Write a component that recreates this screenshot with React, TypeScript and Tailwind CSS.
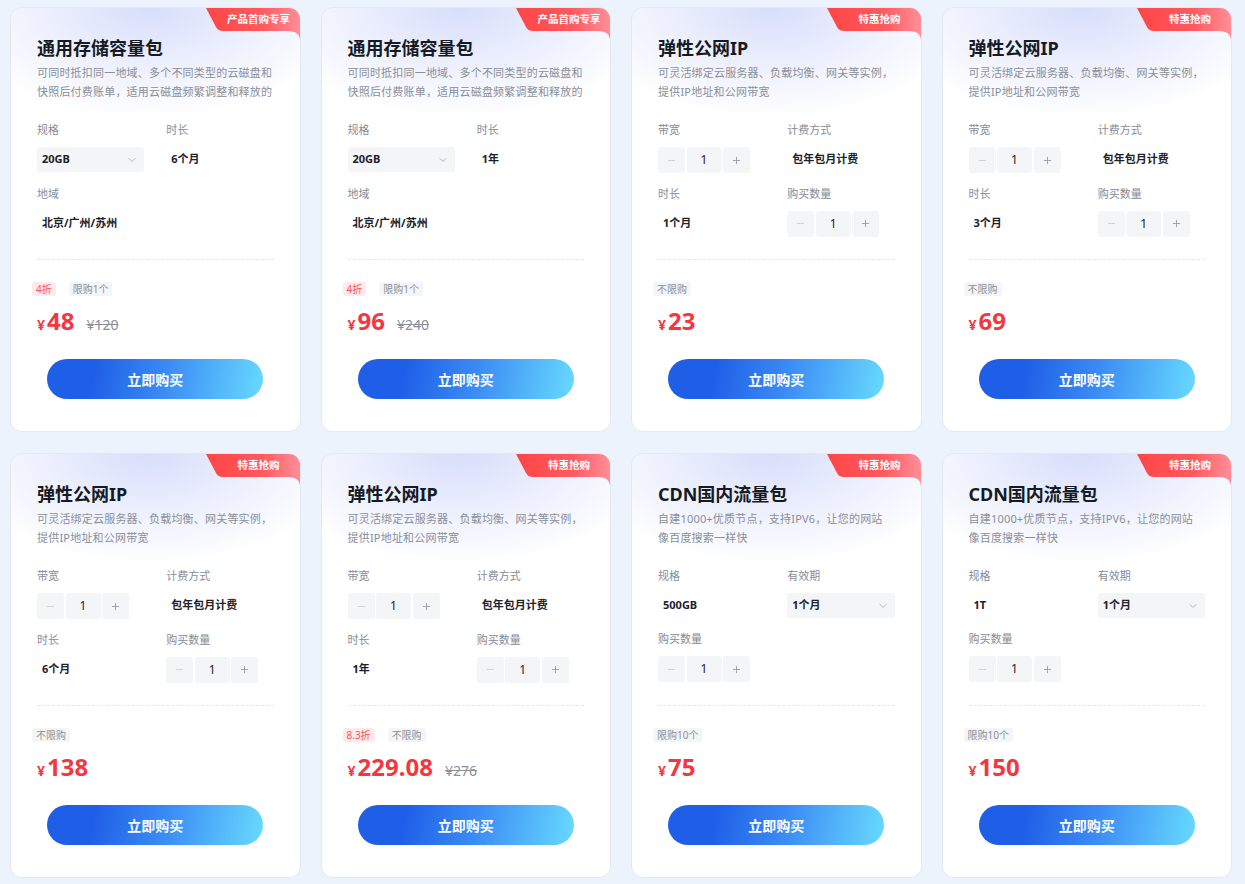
import { ChevronDown, Minus, Plus } from "lucide-react"

type Spec =
  | { label: string; kind: "select"; value: string }
  | { label: string; kind: "text"; value: string }
  | { label: string; kind: "stepper"; value: string }

type Tag = { text: string; red?: boolean }

type Product = {
  badge: string
  title: string
  desc: [string, string]
  specs: Spec[]
  tags: Tag[]
  price: string
  old?: string
}

const storageDesc: [string, string] = [
  "可同时抵扣同一地域、多个不同类型的云磁盘和",
  "快照后付费账单，适用云磁盘频繁调整和释放的",
]
const ipDesc: [string, string] = ["可灵活绑定云服务器、负载均衡、网关等实例，", "提供IP地址和公网带宽"]
const cdnDesc: [string, string] = ["自建1000+优质节点，支持IPV6，让您的网站", "像百度搜索一样快"]

const ipSpecs = (dur: string): Spec[] => [
  { label: "带宽", kind: "stepper", value: "1" },
  { label: "计费方式", kind: "text", value: "包年包月计费" },
  { label: "时长", kind: "text", value: dur },
  { label: "购买数量", kind: "stepper", value: "1" },
]

const cdnSpecs = (size: string): Spec[] => [
  { label: "规格", kind: "text", value: size },
  { label: "有效期", kind: "select", value: "1个月" },
  { label: "购买数量", kind: "stepper", value: "1" },
]

const products: Product[] = [
  {
    badge: "产品首购专享",
    title: "通用存储容量包",
    desc: storageDesc,
    specs: [
      { label: "规格", kind: "select", value: "20GB" },
      { label: "时长", kind: "text", value: "6个月" },
      { label: "地域", kind: "text", value: "北京/广州/苏州" },
    ],
    tags: [{ text: "4折", red: true }, { text: "限购1个" }],
    price: "48",
    old: "120",
  },
  {
    badge: "产品首购专享",
    title: "通用存储容量包",
    desc: storageDesc,
    specs: [
      { label: "规格", kind: "select", value: "20GB" },
      { label: "时长", kind: "text", value: "1年" },
      { label: "地域", kind: "text", value: "北京/广州/苏州" },
    ],
    tags: [{ text: "4折", red: true }, { text: "限购1个" }],
    price: "96",
    old: "240",
  },
  { badge: "特惠抢购", title: "弹性公网IP", desc: ipDesc, specs: ipSpecs("1个月"), tags: [{ text: "不限购" }], price: "23" },
  { badge: "特惠抢购", title: "弹性公网IP", desc: ipDesc, specs: ipSpecs("3个月"), tags: [{ text: "不限购" }], price: "69" },
  { badge: "特惠抢购", title: "弹性公网IP", desc: ipDesc, specs: ipSpecs("6个月"), tags: [{ text: "不限购" }], price: "138" },
  {
    badge: "特惠抢购",
    title: "弹性公网IP",
    desc: ipDesc,
    specs: ipSpecs("1年"),
    tags: [{ text: "8.3折", red: true }, { text: "不限购" }],
    price: "229.08",
    old: "276",
  },
  { badge: "特惠抢购", title: "CDN国内流量包", desc: cdnDesc, specs: cdnSpecs("500GB"), tags: [{ text: "限购10个" }], price: "75" },
  { badge: "特惠抢购", title: "CDN国内流量包", desc: cdnDesc, specs: cdnSpecs("1T"), tags: [{ text: "限购10个" }], price: "150" },
]

function Badge({ text }: { text: string }) {
  return (
    <div className="absolute top-0 right-0 w-[94px] h-[33px]">
      <svg width="94" height="33" viewBox="0 0 94 33" className="absolute inset-0">
        <defs>
          <linearGradient id="badgeGrad" x1="0" y1="0" x2="1" y2="0">
            <stop offset="0" stopColor="#ff4545" />
            <stop offset="0.6" stopColor="#ff5a60" />
            <stop offset="1" stopColor="#ff8e98" />
          </linearGradient>
        </defs>
        <path d="M0 0 H94 V33 Q94 23 82 23 H17 Q12 23 10 19 L0 0 Z" fill="url(#badgeGrad)" />
      </svg>
      <span className="absolute left-[12px] right-0 top-0 h-[23px] flex items-center justify-center text-[10.5px] font-bold text-white leading-none">
        {text}
      </span>
    </div>
  )
}

function Stepper({ value }: { value: string }) {
  return (
    <div className="flex items-center gap-[1.5px] h-[26px]">
      <div className="w-[27px] h-full rounded-[3px] bg-[#f3f5f7] flex items-center justify-center text-[#c4c8ce]">
        <Minus size={11} strokeWidth={1.6} />
      </div>
      <div className="w-[35px] h-full rounded-[3px] bg-[#f3f5f7] flex items-center justify-center text-[12px] text-[#1d2129]">
        {value}
      </div>
      <div className="w-[27px] h-full rounded-[3px] bg-[#f3f5f7] flex items-center justify-center text-[#868c96]">
        <Plus size={11} strokeWidth={1.6} />
      </div>
    </div>
  )
}

function SpecControl({ spec }: { spec: Spec }) {
  if (spec.kind === "stepper") return <Stepper value={spec.value} />
  if (spec.kind === "select")
    return (
      <div className="h-[25px] w-full rounded-[3px] bg-[#f3f5f7] flex items-center justify-between pl-[5px] pr-[6px]">
        <span className="text-[11px] font-bold text-[#1d2129]">{spec.value}</span>
        <ChevronDown size={12} strokeWidth={1.5} className="text-[#9aa0a8]" />
      </div>
    )
  return (
    <div className="h-[25px] flex items-center pl-[5px] text-[11px] font-bold text-[#1d2129]">{spec.value}</div>
  )
}

function Card({ p }: { p: Product }) {
  return (
    <div className="relative overflow-hidden rounded-[12px] border border-[#e3e8f2] bg-white px-[26px] pt-[27px] pb-[32px]">
      <div className="absolute inset-x-0 top-0 h-[120px] bg-[radial-gradient(200px_110px_at_48%_0%,#d8defb_0%,rgba(255,255,255,0)_100%)]" />
      <Badge text={p.badge} />
      <div className="relative">
        <h3 className="text-[18px] leading-[26px] font-bold text-[#161a23]">{p.title}</h3>
        <div className="mt-[2px] h-[38px] overflow-hidden text-[11px] leading-[19px] tracking-[0.2px] text-[#8a8f99] whitespace-nowrap">
          <div>{p.desc[0]}</div>
          <div>{p.desc[1]}</div>
        </div>
        <div className="mt-[21px] grid grid-cols-2 gap-x-[22px] gap-y-[12px] h-[115px]">
          {p.specs.map((s, i) => (
            <div key={i}>
              <div className="text-[11px] leading-[16px] text-[#868c96]">{s.label}</div>
              <div className="mt-[9px]">
                <SpecControl spec={s} />
              </div>
            </div>
          ))}
        </div>
        <div className="mt-[22px] h-px border-t border-dashed border-[#e4e7ec]" />
        <div className="mt-[22px] -ml-[5px] flex items-center gap-[13px]">
          {p.tags.map((t, i) => (
            <span
              key={i}
              className={
                t.red
                  ? "h-[14px] px-[4px] rounded-[3px] bg-[#ffe9ea] text-[#f2565d] text-[10px] leading-[14px]"
                  : "h-[14px] px-[4px] rounded-[3px] bg-[#f4f5f7] text-[#8a8f98] text-[10px] leading-[14px]"
              }
            >
              {t.text}
            </span>
          ))}
        </div>
        <div className="mt-[9px] flex items-baseline h-[32px]">
          <span className="text-[14px] font-bold text-[#f5363f] mr-[2px]">¥</span>
          <span className="text-[24px] leading-[32px] font-bold text-[#f5363f]">{p.price}</span>
          {p.old && (
            <span className="ml-[12px] text-[14px] text-[#8a8f98] line-through">¥{p.old}</span>
          )}
        </div>
        <div className="mt-[22px] flex justify-center">
          <button className="w-[216px] h-[40px] rounded-full bg-[linear-gradient(100deg,#1f5fe8_22%,#3b8cf5_55%,#68dafe_100%)] text-white text-[14px] font-bold">
            立即购买
          </button>
        </div>
      </div>
    </div>
  )
}

export default function App() {
  return (
    <div
      className="min-h-[884px] bg-[#edf3fd] pl-[10px] pr-[13px] pt-[7px] pb-[5px]"
      style={{ fontFamily: '"Noto Sans", "Noto Sans CJK SC", sans-serif' }}
    >
      <div className="grid grid-cols-4 gap-x-5 gap-y-[21px]">
        {products.map((p, i) => (
          <Card key={i} p={p} />
        ))}
      </div>
    </div>
  )
}
